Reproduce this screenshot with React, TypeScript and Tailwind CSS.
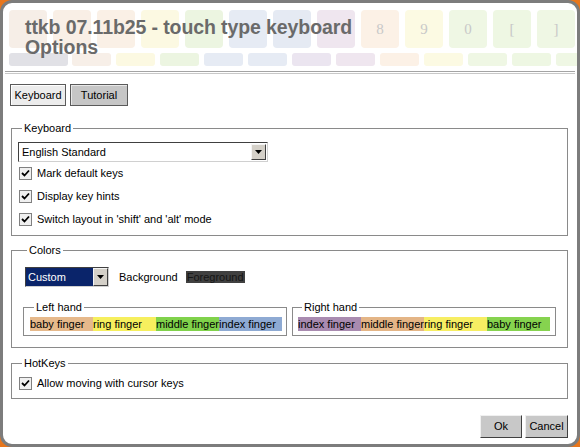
import React from "react";

const font = { fontFamily: '"Liberation Sans", Arial, sans-serif' };

function Check() {
  return (
    <span className="w-[13px] h-[13px] shrink-0 border border-[#808080] bg-[#f0f0f0] flex items-center justify-center">
      <svg width="9" height="9" viewBox="0 0 9 9">
        <path d="M1 4 L3.5 6.5 L8 1.5" fill="none" stroke="#000" strokeWidth="1.8" />
      </svg>
    </span>
  );
}

function Arrow() {
  return (
    <span className="w-[15px] h-full bg-[#d4d0c8] border-t border-l border-t-[#f4f4f4] border-l-[#f4f4f4] border-r border-b border-r-[#404040] border-b-[#404040] flex items-center justify-center">
      <svg width="7" height="4" viewBox="0 0 7 4">
        <path d="M0 0 H7 L3.5 4 Z" fill="#000" />
      </svg>
    </span>
  );
}

function CheckRow({ label }: { label: string }) {
  return (
    <div className="h-[23px] flex items-center gap-[5px] pl-[1px]">
      <Check />
      <span>{label}</span>
    </div>
  );
}

function Finger({ label, color }: { label: string; color: string }) {
  return (
    <span className={`w-[63px] h-[14px] leading-[14px] whitespace-nowrap overflow-hidden ${color}`}>{label}</span>
  );
}

const row1 = [
  "#f6eee7", "#f9efe6", "#faf0e6", "#fcf9e2", "#ecf5e1", "#e6ebf4", "#e5eaf3", "#efe6ef",
  "#fcf1e6", "#fcfae3", "#eff7e4", "#eef7e3", "#eff7e4",
];
const row1Labels: Record<number, string> = { 8: "8", 9: "9", 10: "0", 11: "[", 12: "]" };
const row2 = [
  "#f7efe8", "#fcf9e2", "#ecf5e1", "#e6ebf4", "#e6ebf4", "#ebe5f0", "#efe6ef",
  "#fcf1e6", "#fcfae3", "#eff7e4", "#eef7e3", "#eff7e4",
];

export default function App() {
  return (
    <div className="w-[580px] h-[447px] bg-[#e8761c]" style={font}>
      <div className="w-full h-full rounded-[12px] border-[3px] border-[#7c7c7c] bg-white overflow-hidden flex flex-col text-[11px] text-black">
        {/* Header */}
        <div className="relative h-[68px] shrink-0">
          <svg className="absolute left-[-3px] top-[-3px]" width="580" height="72" viewBox="0 0 580 72">
            {row1.map((c, i) => (
              <g key={i}>
                <rect x={9 + 44 * i} y={10} width={38} height={38} rx={4} fill={c} />
                {row1Labels[i] && (
                  <text x={9 + 44 * i + 19} y={34} textAnchor="middle" fontSize="15" fill="#c8c8c8" fontFamily='"Liberation Serif", serif'>
                    {row1Labels[i]}
                  </text>
                )}
              </g>
            ))}
            <rect x={9} y={53} width={59} height={13} rx={3} fill="#e1e1e6" />
            {row2.map((c, j) => (
              <rect key={j} x={72 + 44 * j} y={53} width={39} height={13} rx={3} fill={c} />
            ))}
          </svg>
          <div className="relative pl-[22px] pt-[14px] text-[19.5px] leading-[20px] font-bold text-[#6a6a6a] tracking-[-0.1px]">
            <div>ttkb 07.11b25 - touch type keyboard</div>
            <div>Options</div>
          </div>
        </div>
        <div className="mx-[2px] h-[3px] shrink-0 border-t border-b border-t-[#a4a4a4] border-b-[#c8c8c8]" />

        {/* Body */}
        <div className="flex-1 flex flex-col pl-[8px] pr-[9px]">
          <div className="flex gap-[4px] mt-[10px] ml-[-1px]">
            <div className="w-[56px] h-[22px] flex items-center justify-center bg-[#ececec] border border-[#5a5a5a] shadow-[inset_1px_1px_0_#fff]">Keyboard</div>
            <div className="w-[58px] h-[22px] flex items-center justify-center bg-[#c6c6c6] border border-[#5a5a5a] shadow-[inset_1px_1px_0_#e8e8e8]">Tutorial</div>
          </div>

          <fieldset className="mt-[16px] border border-[#8a8a8a] pl-[6px] pr-[6px] pb-[4px]">
            <legend className="ml-[4px] px-[2px] leading-[13px]">Keyboard</legend>
            <div className="mt-[7px] w-[250px] h-[20px] flex items-center bg-white border border-t-[#404040] border-l-[#404040] border-r-[#d0d0d0] border-b-[#d0d0d0] p-[1px]">
              <span className="flex-1 pl-[2px]">English Standard</span>
              <Arrow />
            </div>
            <CheckRow label="Mark default keys" />
            <CheckRow label="Display key hints" />
            <CheckRow label="Switch layout in 'shift' and 'alt' mode" />
          </fieldset>

          <fieldset className="mt-[8px] border border-[#8a8a8a] pl-[11px] pr-[11px] pb-[11px]">
            <legend className="ml-[4px] px-[2px] leading-[13px]">Colors</legend>
            <div className="mt-[10px] flex items-center">
              <div className="ml-[2px] w-[84px] h-[20px] flex items-center bg-[#0a246a] border border-t-[#404040] border-l-[#404040] border-r-[#d0d0d0] border-b-[#d0d0d0]">
                <span className="flex-1 pl-[2px] text-white">Custom</span>
                <Arrow />
              </div>
              <span className="ml-[10px]">Background</span>
              <span className="ml-[8px] bg-[#404040] text-[#151515] leading-[12px] px-[1px]">Foreground</span>
            </div>
            <div className="mt-[14px] flex gap-[5px]">
              <fieldset className="w-[264px] border border-[#8a8a8a] pl-[6px] pb-[4px]">
                <legend className="ml-[4px] px-[2px] leading-[13px]">Left hand</legend>
                <div className="mt-[3px] flex">
                  <Finger label="baby finger" color="bg-[#e6b98b]" />
                  <Finger label="ring finger" color="bg-[#f6ef5e]" />
                  <Finger label="middle finger" color="bg-[#80d24b]" />
                  <Finger label="index finger" color="bg-[#8eaad3]" />
                </div>
              </fieldset>
              <fieldset className="w-[264px] border border-[#8a8a8a] pl-[5px] pb-[4px]">
                <legend className="ml-[4px] px-[2px] leading-[13px]">Right hand</legend>
                <div className="mt-[3px] flex">
                  <Finger label="index finger" color="bg-[#a98bb0]" />
                  <Finger label="middle finger" color="bg-[#e4b586]" />
                  <Finger label="ring finger" color="bg-[#f7ee63]" />
                  <Finger label="baby finger" color="bg-[#86d34f]" />
                </div>
              </fieldset>
            </div>
          </fieldset>

          <fieldset className="mt-[9px] border border-[#8a8a8a] pl-[6px] pb-[3px]">
            <legend className="ml-[4px] px-[2px] leading-[13px]">HotKeys</legend>
            <div className="pt-[2px]">
              <CheckRow label="Allow moving with cursor keys" />
            </div>
          </fieldset>

          <div className="mt-[16px] flex justify-end gap-[3px]">
            <div className="w-[42px] h-[23px] flex items-center justify-center bg-[#c8c8c8] border border-t-[#f0f0f0] border-l-[#f0f0f0] border-r-[#404040] border-b-[#404040]">Ok</div>
            <div className="w-[43px] h-[23px] flex items-center justify-center bg-[#c8c8c8] border border-t-[#f0f0f0] border-l-[#f0f0f0] border-r-[#404040] border-b-[#404040]">Cancel</div>
          </div>
        </div>
      </div>
    </div>
  );
}
